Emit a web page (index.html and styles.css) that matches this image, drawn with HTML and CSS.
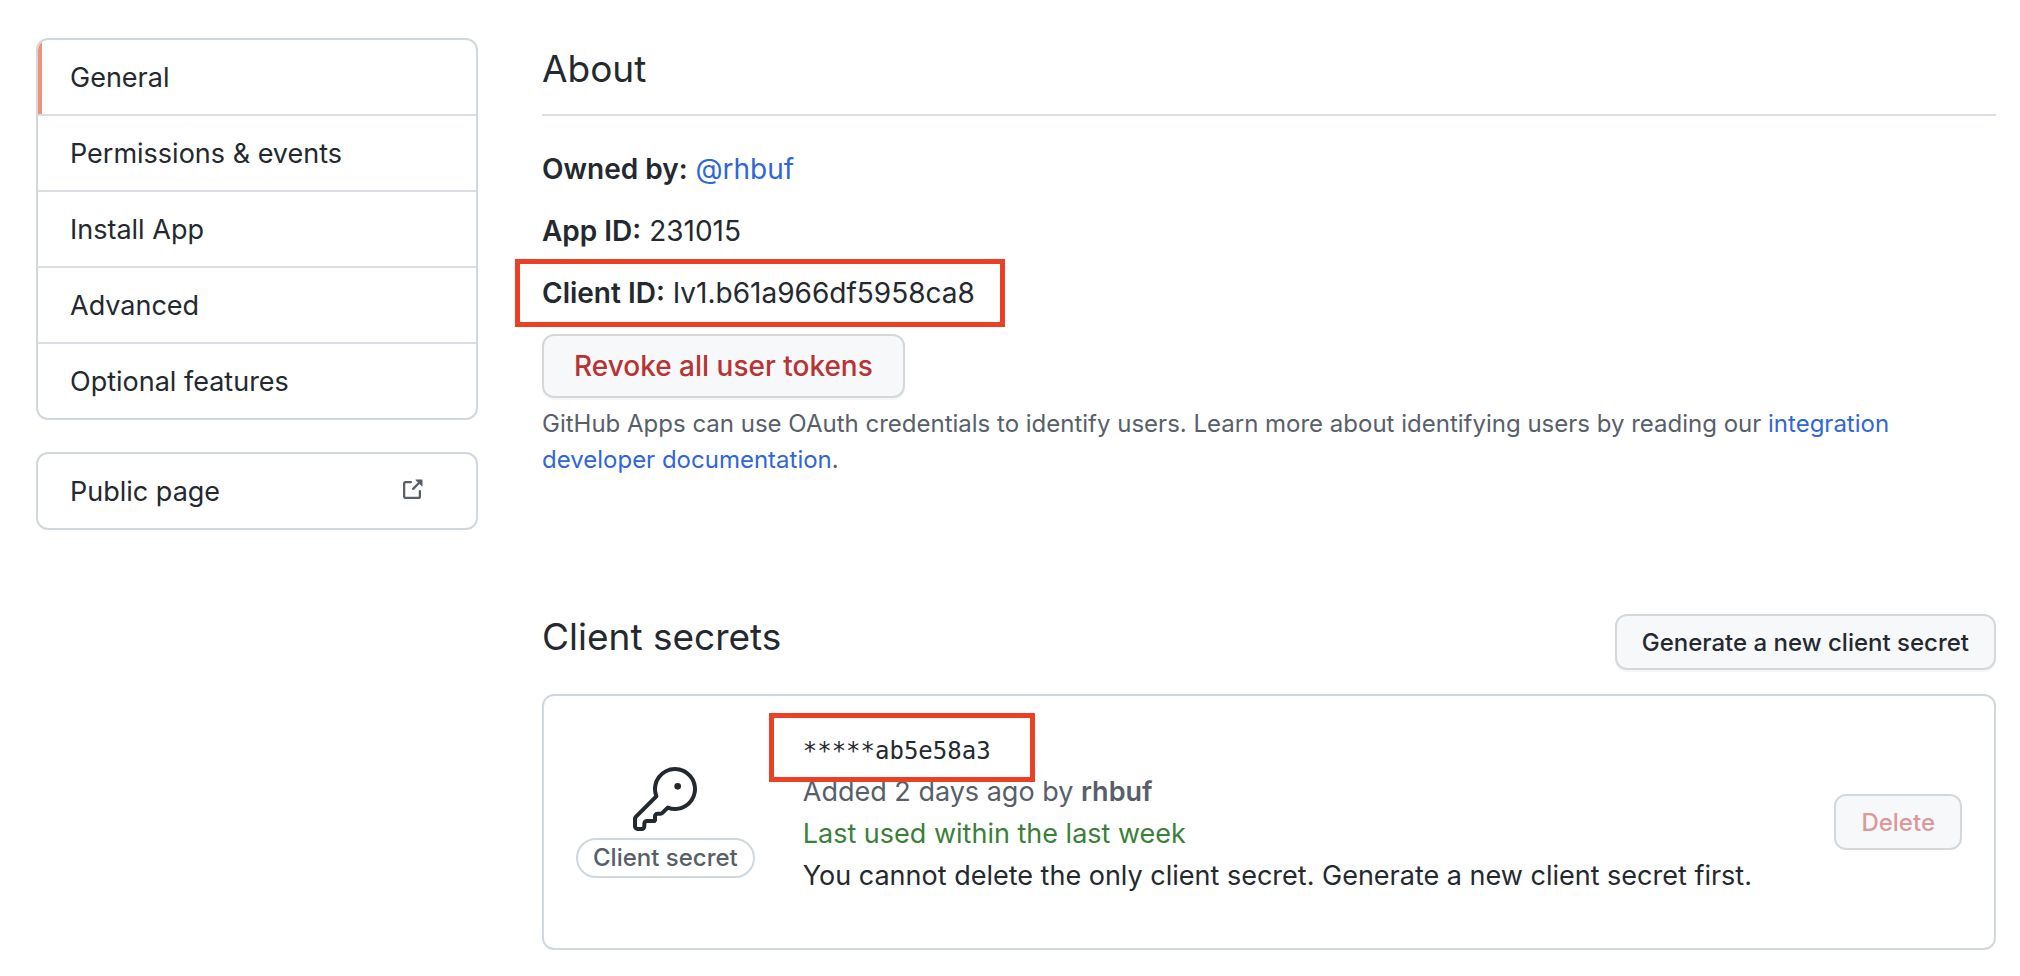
FILE: index.html
```html
<!DOCTYPE html>
<html lang="en">
<head>
  <meta charset="utf-8">
  <title>GitHub App settings</title>
  <link rel="stylesheet" href="styles.css">
</head>
<body>
  <div class="layout">
    <aside class="sidebar">
      <nav class="menu">
        <a class="menu-item selected" href="#general">General</a>
        <a class="menu-item" href="#permissions">Permissions &amp; events</a>
        <a class="menu-item" href="#install">Install App</a>
        <a class="menu-item" href="#advanced">Advanced</a>
        <a class="menu-item" href="#features">Optional features</a>
      </nav>
      <nav class="menu">
        <a class="menu-item menu-external" href="#public">
          Public page
          <svg class="external-icon" viewBox="0 0 16 16" width="24" height="24" aria-hidden="true">
            <path d="M10.604 1h4.146a.25.25 0 01.25.25v4.146a.25.25 0 01-.427.177L13.03 4.03 9.28 7.78a.75.75 0 01-1.06-1.06l3.75-3.75-1.543-1.543A.25.25 0 0110.604 1zM3.75 2A1.75 1.75 0 002 3.75v8.5c0 .966.784 1.75 1.75 1.75h8.5A1.75 1.75 0 0014 12.25v-3.5a.75.75 0 00-1.5 0v3.5a.25.25 0 01-.25.25h-8.5a.25.25 0 01-.25-.25v-8.5a.25.25 0 01.25-.25h3.5a.75.75 0 000-1.5h-3.5z"/>
          </svg>
        </a>
      </nav>
    </aside>

    <main class="content">
      <section class="about">
        <h2 class="heading heading-ruled">About</h2>
        <p class="field"><strong>Owned by:</strong> <a href="#rhbuf">@rhbuf</a></p>
        <p class="field"><strong>App ID:</strong> 231015</p>
        <p class="field"><span class="marked"><strong>Client ID:</strong> Iv1.b61a966df5958ca8</span></p>
        <button class="btn btn-danger" type="button">Revoke all user tokens</button>
        <p class="note">GitHub Apps can use OAuth credentials to identify users. Learn more about identifying users by reading our <a href="#docs">integration developer documentation</a>.</p>
      </section>

      <section class="secrets">
        <div class="secrets-header">
          <h2 class="heading">Client secrets</h2>
          <button class="btn btn-sm" type="button">Generate a new client secret</button>
        </div>
        <div class="secret-card">
          <div class="secret-type">
            <svg class="key-icon" viewBox="0 0 24 24" width="64" height="64" aria-hidden="true">
              <path d="M16.75 8.5a1.25 1.25 0 100-2.5 1.25 1.25 0 000 2.5z"/>
              <path fill-rule="evenodd" d="M15.75 0a8.25 8.25 0 00-7.851 10.79L.513 18.178A1.75 1.75 0 000 19.414v2.836C0 23.217.784 24 1.75 24h1.5A1.75 1.75 0 005 22.25v-1a.25.25 0 01.25-.25h2.735a.75.75 0 00.545-.22l.214-.213A.875.875 0 009 19.948V18.5a.25.25 0 01.25-.25h1.086c.464 0 .91-.184 1.237-.513l1.636-1.636A8.25 8.25 0 1015.75 0zM9 8.25a6.75 6.75 0 114.288 6.287.75.75 0 00-.804.168l-1.971 1.972a.25.25 0 01-.177.073H9.25A1.75 1.75 0 007.5 18.5v1H5.25a1.75 1.75 0 00-1.75 1.75v1a.25.25 0 01-.25.25h-1.5a.25.25 0 01-.25-.25v-2.836a.25.25 0 01.073-.177l7.722-7.721a.75.75 0 00.168-.804A6.73 6.73 0 019 8.25z"/>
            </svg>
            <span class="label">Client secret</span>
          </div>
          <div class="secret-info">
            <div class="secret-value"><code class="marked marked-secret">*****ab5e58a3</code></div>
            <div class="muted">Added 2 days ago by <strong>rhbuf</strong></div>
            <div class="used">Last used within the last week</div>
            <div>You cannot delete the only client secret. Generate a new client secret first.</div>
          </div>
          <button class="btn btn-sm btn-danger" type="button" disabled>Delete</button>
        </div>
      </section>
    </main>
  </div>
</body>
</html>
```

FILE: styles.css
```css
* {
  box-sizing: border-box;
}

body {
  margin: 0;
  background-color: #fff;
  color: #24292f;
  font-family: Inter, "Liberation Sans", sans-serif;
  font-size: 27px;
  line-height: 42px;
}

a {
  color: #2f66d8;
  text-decoration: none;
}

strong {
  font-weight: 600;
}

.layout {
  display: flex;
  gap: 64px;
  padding: 38px 24px 26px 36px;
}

/* Sidebar */
.sidebar {
  flex: 0 0 442px;
}

.menu {
  margin-bottom: 32px;
  border: 2px solid #d0d7de;
  border-radius: 12px;
  overflow: hidden;
}

.menu-item {
  display: block;
  padding: 17px 32px 15px;
  border-bottom: 2px solid #d8dee4;
  color: #24292f;
}

.menu-item:last-child {
  border-bottom: 0;
}

.selected {
  box-shadow: inset 4px 0 0 #f2917a;
}

.menu-external {
  display: flex;
  align-items: center;
  justify-content: space-between;
  padding-right: 52px;
}

.external-icon {
  margin-bottom: 4px;
  fill: #57606a;
}

/* Main column */
.content {
  flex: 1;
  min-width: 0;
}

.heading {
  margin: 0;
  font-size: 37px;
  font-weight: 400;
  line-height: 62px;
}

.heading-ruled {
  padding-bottom: 14px;
  margin-bottom: 32px;
  border-bottom: 2px solid #d8dee4;
}

.field {
  margin: 0 0 20px;
  font-size: 28px;
}

.field:last-of-type {
  margin-bottom: 0;
}

/* Red frame drawn around a value */
.marked {
  display: inline-block;
  position: relative;
}

.marked::after {
  content: "";
  position: absolute;
  inset: -13px -30px -13px -27px;
  border: 5px solid #eb4026;
}

.marked-secret::after {
  inset: -17px -44px -10px -34px;
}

.btn {
  height: 64px;
  padding: 0 30px;
  border: 2px solid #d5d8da;
  border-radius: 12px;
  background-color: #f6f8fa;
  box-shadow: 0 2px 0 rgba(27, 31, 36, 0.04);
  color: #24292f;
  font-family: inherit;
  font-size: 28px;
  font-weight: 500;
}

.btn-sm {
  height: 56px;
  padding: 0 25px;
  font-size: 24px;
}

.btn-danger {
  color: #b83333;
}

.btn:disabled {
  color: #dc9999;
  box-shadow: none;
}

.note {
  margin: 8px 0 0;
  color: #57606a;
  font-size: 24px;
  line-height: 36px;
}

/* Client secrets */
.secrets {
  margin-top: 128px;
}

.secrets-header {
  display: flex;
  align-items: flex-end;
  justify-content: space-between;
  margin-bottom: 24px;
}

.secrets-header .heading {
  padding-bottom: 2px;
}

.secret-card {
  display: flex;
  align-items: center;
  padding: 32px;
  min-height: 256px;
  border: 2px solid #d0d7de;
  border-radius: 12px;
}

.secret-type {
  display: flex;
  flex-direction: column;
  align-items: center;
  gap: 7px;
  margin-right: 48px;
}

.key-icon {
  fill: #24292f;
}

.label {
  padding: 0 15px;
  border: 2px solid #d0d7de;
  border-radius: 20px;
  color: #57606a;
  font-size: 24px;
  font-weight: 500;
  line-height: 36px;
}

.secret-info {
  flex: 1;
  padding-bottom: 18px;
}

.secret-value {
  height: 42px;
}

.secret-value code {
  font-family: "DejaVu Sans Mono", monospace;
  font-size: 24px;
}

.muted {
  color: #57606a;
}

.used {
  color: #3a7f3a;
}
```
